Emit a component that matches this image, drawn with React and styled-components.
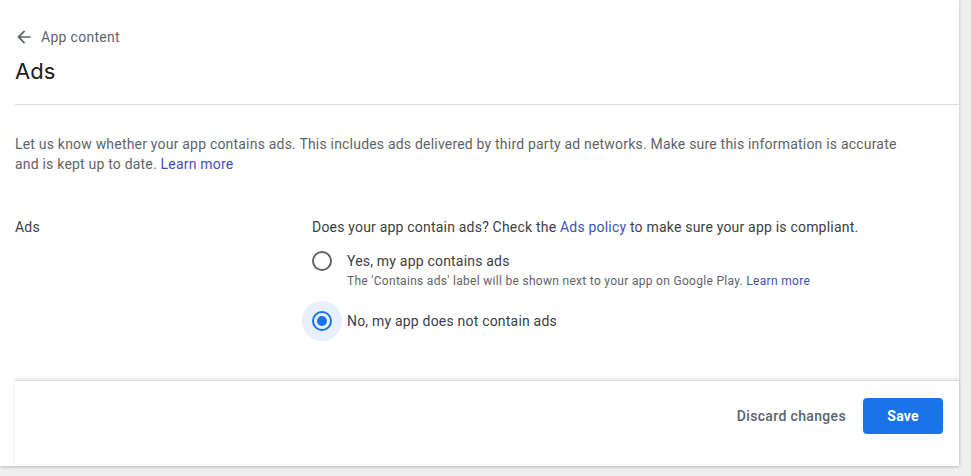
import React, { useState } from 'react';
import styled, { createGlobalStyle } from 'styled-components';

const GlobalStyle = createGlobalStyle`
  html, body {
    margin: 0;
    padding: 0;
    background: #efefef;
    font-family: Roboto, "Liberation Sans", Arial, sans-serif;
    -webkit-font-smoothing: antialiased;
  }
`;

const Page = styled.div`
  display: flex;
  width: 971px;
  height: 476px;
  overflow: hidden;
`;

const Panel = styled.div`
  width: 959px;
  height: 466px;
  background: #fff;
  box-shadow: 0 1px 3px rgba(60, 64, 67, 0.3);
  display: flex;
  flex-direction: column;
  box-sizing: border-box;
  padding-left: 15px;
`;

const Header = styled.div`
  padding-top: 27px;
  border-bottom: 1px solid #dadce0;
  height: 105px;
  box-sizing: border-box;
`;

const BackLink = styled.a`
  display: flex;
  align-items: center;
  gap: 7px;
  height: 20px;
  font-size: 14px;
  color: #5f6368;
  text-decoration: none;
  cursor: pointer;
  letter-spacing: 0.3px;

  svg {
    margin-left: -1px;
  }
`;

const Title = styled.h1`
  margin: 10px 0 0;
  font-family: Inter, Roboto, sans-serif;
  font-weight: 400;
  font-size: 22px;
  line-height: 28px;
  color: #202124;
`;

const Body = styled.div`
  flex: 1;
  padding-top: 29px;
  padding-right: 40px;
`;

const Intro = styled.p`
  margin: 0;
  max-width: 890px;
  font-size: 14px;
  line-height: 20px;
  letter-spacing: 0.2px;
  color: #5f6368;
`;

const Link = styled.a`
  color: #3f51b5;
  text-decoration: none;
  cursor: pointer;
`;

const FieldRow = styled.div`
  display: grid;
  grid-template-columns: 297px 1fr;
  margin-top: 43px;
`;

const FieldLabel = styled.div`
  font-size: 14px;
  line-height: 20px;
  letter-spacing: 0.2px;
  color: #3c4043;
`;

const FieldContent = styled.div`
  display: flex;
  flex-direction: column;
`;

const Question = styled.div`
  font-size: 14px;
  line-height: 20px;
  letter-spacing: 0.2px;
  color: #3c4043;
  margin-bottom: 4px;
`;

const Options = styled.div`
  display: flex;
  flex-direction: column;
  gap: 12px;
`;

const Option = styled.label`
  display: flex;
  align-items: flex-start;
  margin-left: -10px;
  cursor: pointer;
`;

const Halo = styled.span`
  width: 40px;
  height: 40px;
  flex: none;
  border-radius: 50%;
  display: flex;
  align-items: center;
  justify-content: center;
  background: ${({ checked }) => (checked ? '#e8f0fe' : 'transparent')};
`;

const Circle = styled.span`
  width: 20px;
  height: 20px;
  box-sizing: border-box;
  border-radius: 50%;
  border: 2px solid ${({ checked }) => (checked ? '#1a73e8' : '#5f6368')};
  display: flex;
  align-items: center;
  justify-content: center;

  &::after {
    content: '';
    width: 10px;
    height: 10px;
    border-radius: 50%;
    background: #1a73e8;
    display: ${({ checked }) => (checked ? 'block' : 'none')};
  }
`;

const OptionText = styled.span`
  display: flex;
  flex-direction: column;
  padding-top: 10px;
  margin-left: 5px;
`;

const OptionLabel = styled.span`
  font-size: 14px;
  line-height: 20px;
  letter-spacing: 0.2px;
  color: #3c4043;
`;

const OptionHint = styled.span`
  margin-top: 2px;
  font-size: 12px;
  line-height: 16px;
  letter-spacing: 0.3px;
  color: #5f6368;
`;

const Footer = styled.div`
  height: 86px;
  box-sizing: border-box;
  border-top: 1px solid #dadce0;
  box-shadow: 0 -2px 3px rgba(60, 64, 67, 0.12);
  display: flex;
  justify-content: flex-end;
  align-items: flex-start;
  gap: 9px;
  padding: 17px 16px 0 0;
`;

const TextButton = styled.button`
  height: 36px;
  padding: 0 8px;
  border: none;
  background: none;
  font-family: inherit;
  font-size: 14px;
  font-weight: 500;
  color: #5f6368;
  letter-spacing: 0.35px;
  cursor: pointer;
`;

const PrimaryButton = styled.button`
  width: 80px;
  height: 36px;
  border: none;
  border-radius: 4px;
  background: #1a73e8;
  color: #fff;
  font-family: inherit;
  font-size: 14px;
  font-weight: 700;
  letter-spacing: 0.2px;
  cursor: pointer;
`;

const ArrowBack = () => (
  <svg width="20" height="20" viewBox="0 0 24 24" fill="#5f6368">
    <path d="M20 11H7.83l5.59-5.59L12 4l-8 8 8 8 1.41-1.41L7.83 13H20v-2z" />
  </svg>
);

const RadioOption = ({ checked, label, hint, onSelect }) => (
  <Option onClick={onSelect}>
    <Halo checked={checked}>
      <Circle checked={checked} />
    </Halo>
    <OptionText>
      <OptionLabel>{label}</OptionLabel>
      {hint && <OptionHint>{hint}</OptionHint>}
    </OptionText>
  </Option>
);

export default function App() {
  const [containsAds, setContainsAds] = useState(false);

  return (
    <Page>
      <GlobalStyle />
      <Panel>
        <Header>
          <BackLink>
            <ArrowBack />
            App content
          </BackLink>
          <Title>Ads</Title>
        </Header>
        <Body>
          <Intro>
            Let us know whether your app contains ads. This includes ads delivered by third party ad
            networks. Make sure this information is accurate and is kept up to date.{' '}
            <Link>Learn more</Link>
          </Intro>
          <FieldRow>
            <FieldLabel>Ads</FieldLabel>
            <FieldContent>
              <Question>
                Does your app contain ads? Check the <Link>Ads policy</Link> to make sure your app is
                compliant.
              </Question>
              <Options>
                <RadioOption
                  checked={containsAds}
                  onSelect={() => setContainsAds(true)}
                  label="Yes, my app contains ads"
                  hint={
                    <>
                      The 'Contains ads' label will be shown next to your app on Google Play.{' '}
                      <Link>Learn more</Link>
                    </>
                  }
                />
                <RadioOption
                  checked={!containsAds}
                  onSelect={() => setContainsAds(false)}
                  label="No, my app does not contain ads"
                />
              </Options>
            </FieldContent>
          </FieldRow>
        </Body>
        <Footer>
          <TextButton>Discard changes</TextButton>
          <PrimaryButton>Save</PrimaryButton>
        </Footer>
      </Panel>
    </Page>
  );
}
